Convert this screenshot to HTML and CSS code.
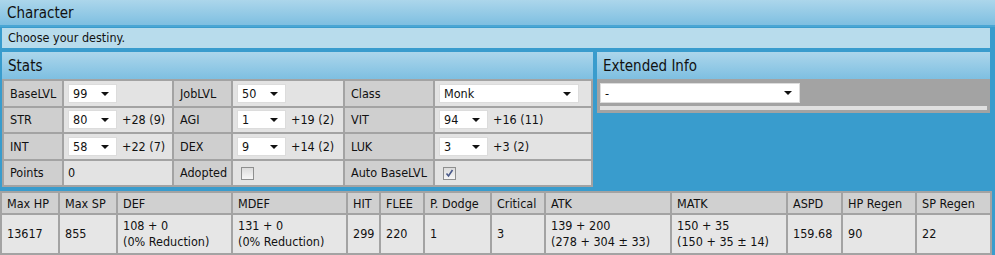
FILE: index.html
```html
<!DOCTYPE html>
<html>
<head>
<meta charset="utf-8">
<link rel="stylesheet" href="styles.css">
</head>
<body>
<div class="page">
  <div class="title">Character</div>
  <div class="desc">Choose your destiny.</div>
  <div class="panels">
    <div class="panel stats">
      <div class="phead">Stats</div>
      <table class="stab">
        <colgroup><col class="c1"><col class="c2"><col class="c3"><col class="c4"><col class="c5"><col class="c6"></colgroup>
        <tr>
          <td class="lab">BaseLVL</td>
          <td class="val"><span class="sel s-sm">99<i></i></span></td>
          <td class="lab">JobLVL</td>
          <td class="val"><span class="sel s-sm">50<i></i></span></td>
          <td class="lab">Class</td>
          <td class="val"><span class="sel s-lg">Monk<i></i></span></td>
        </tr>
        <tr>
          <td class="lab">STR</td>
          <td class="val"><span class="sel s-sm">80<i></i></span><span class="bonus">+28 (9)</span></td>
          <td class="lab">AGI</td>
          <td class="val"><span class="sel s-sm">1<i></i></span><span class="bonus">+19 (2)</span></td>
          <td class="lab">VIT</td>
          <td class="val"><span class="sel s-sm">94<i></i></span><span class="bonus">+16 (11)</span></td>
        </tr>
        <tr>
          <td class="lab">INT</td>
          <td class="val"><span class="sel s-sm">58<i></i></span><span class="bonus">+22 (7)</span></td>
          <td class="lab">DEX</td>
          <td class="val"><span class="sel s-sm">9<i></i></span><span class="bonus">+14 (2)</span></td>
          <td class="lab">LUK</td>
          <td class="val"><span class="sel s-sm">3<i></i></span><span class="bonus">+3 (2)</span></td>
        </tr>
        <tr>
          <td class="lab">Points</td>
          <td class="val">0</td>
          <td class="lab">Adopted</td>
          <td class="val"><span class="cb"></span></td>
          <td class="lab">Auto BaseLVL</td>
          <td class="val"><span class="cb"><svg width="11" height="11" viewBox="0 0 11 11"><path d="M2.5 5.5 L4.5 8 L8.5 2" fill="none" stroke="#4a5a8a" stroke-width="1.6"/></svg></span></td>
        </tr>
      </table>
    </div>
    <div class="panel ext">
      <div class="phead">Extended Info</div>
      <div class="ebody">
        <span class="sel s-xl">-<i></i></span>
        <div class="strip"></div>
      </div>
    </div>
  </div>
  <table class="btab">
    <colgroup>
      <col style="width:56px"><col style="width:56px"><col style="width:113px"><col style="width:113px"><col style="width:31px"><col style="width:42px"><col style="width:65px"><col style="width:52px"><col style="width:124px"><col style="width:114px"><col style="width:53px"><col style="width:72px"><col style="width:73px">
    </colgroup>
    <tr class="bh">
      <th>Max HP</th><th>Max SP</th><th>DEF</th><th>MDEF</th><th>HIT</th><th>FLEE</th><th>P. Dodge</th><th>Critical</th><th>ATK</th><th>MATK</th><th>ASPD</th><th>HP Regen</th><th>SP Regen</th>
    </tr>
    <tr class="bd">
      <td>13617</td><td>855</td><td>108 + 0<br>(0% Reduction)</td><td>131 + 0<br>(0% Reduction)</td><td>299</td><td>220</td><td>1</td><td>3</td><td>139 + 200<br>(278 + 304 ± 33)</td><td>150 + 35<br>(150 + 35 ± 14)</td><td>159.68</td><td>90</td><td>22</td>
    </tr>
  </table>
</div>
</body>
</html>
```
FILE: styles.css
```css
* { box-sizing: border-box; }
html, body { margin: 0; padding: 0; }
body {
  background: #399ccd;
  font-family: "DejaVu Sans Condensed", "DejaVu Sans", sans-serif;
  font-size: 12.5px;
  color: #111;
}
.page { width: 995px; height: 255px; overflow: hidden; }
.title {
  height: 27px;
  background: linear-gradient(#acd6eb, #7ebfe1);
  border-bottom: 2px solid #4aa6d4;
  font-size: 15px;
  line-height: 27px;
  padding-left: 7px;
  color: #111;
}
.desc {
  margin: 1px 5px 0 2px;
  height: 20px;
  background: #b8dcec;
  line-height: 20px;
  padding-left: 6px;
}
.panels {
  display: flex;
  gap: 4px;
  margin: 4px 0 0 2px;
  align-items: flex-start;
}
.panel { background: #a3a3a3; }
.phead {
  height: 27px;
  background: linear-gradient(#acd6eb, #7ebfe1);
  font-size: 15px;
  line-height: 28px;
  padding-left: 6px;
}
.stats { width: 591px; }
.ext { width: 393px; }
.stab {
  border-collapse: separate;
  border-spacing: 2px;
  width: 591px;
  table-layout: fixed;
}
.c1 { width: 58px; } .c2 { width: 108px; } .c3 { width: 57px; }
.c4 { width: 110px; } .c5 { width: 88px; } .c6 { width: 156px; }
.stab td { height: 24.5px; padding: 0 0 0 6px; white-space: nowrap; }
.stab td.lab { background: #cfcfcf; }
.stab td.val { background: #e3e3e3; padding-left: 4px; }
.sel {
  display: inline-flex;
  align-items: center;
  height: 19px;
  background: #fff;
  border: 1px solid #dcdcdc;
  padding-left: 4px;
  position: relative;
  vertical-align: middle;
}
.sel i {
  position: absolute;
  right: 7px;
  top: 7px;
  width: 0; height: 0;
  border-left: 4px solid transparent;
  border-right: 4px solid transparent;
  border-top: 4px solid #111;
}
.s-sm { width: 49px; }
.s-lg { width: 140px; }
.s-xl { width: 200px; height: 20px; }
.bonus { margin-left: 5px; vertical-align: middle; }
.cb {
  display: inline-block;
  width: 13px; height: 13px;
  border: 1px solid #8e8f8f;
  background: linear-gradient(#dcdcdc, #f6f6f6);
  vertical-align: middle;
  margin-left: 4px;
  position: relative;
}
.cb svg { position: absolute; left: 0; top: 0; }
.ebody { padding: 4px 3px 3px 3px; }
.ebody .sel { display: flex; }
.strip { height: 4px; background: #e0e0e0; margin-top: 3px; }
.btab {
  margin-top: 4px;
  border-collapse: separate;
  border-spacing: 2px;
  background: #a3a3a3;
  width: 992px;
  table-layout: fixed;
}
.btab th, .btab td { text-align: left; font-weight: normal; padding: 0 0 0 5px; white-space: nowrap; }
.btab th { background: #d0d0d0; height: 20px; }
.btab td { background: #e6e6e6; height: 38px; line-height: 16px; }
```
